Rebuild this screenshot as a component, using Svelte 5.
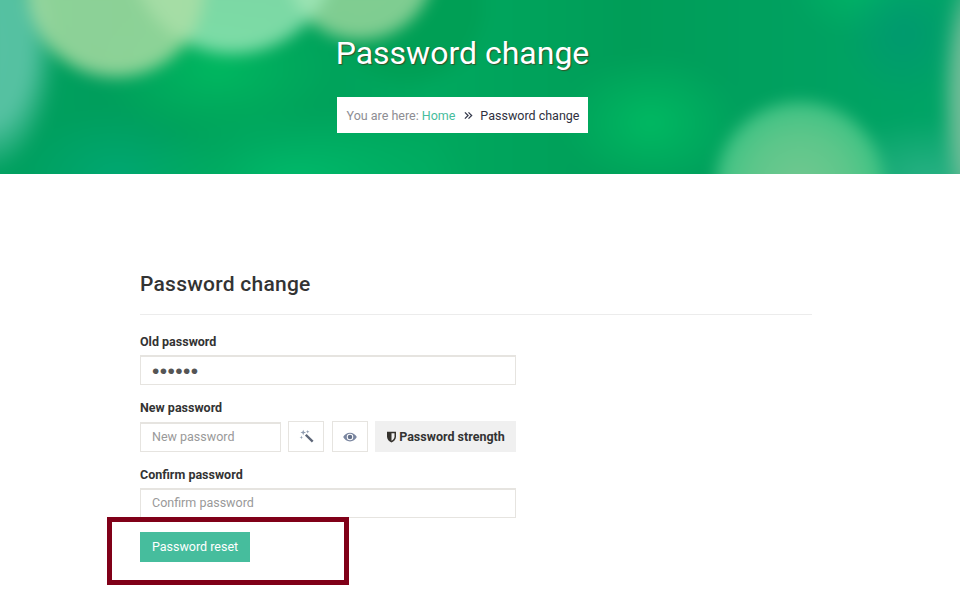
<script lang="ts">
	let oldPassword = $state('123456');
</script>

<header class="hero">
	<h1>Password change</h1>
	<div class="crumbs">
		<span class="here">You are here:</span>
		<a href="#home">Home</a>
		<svg class="chev" viewBox="0 0 10 10" width="9" height="9">
			<path d="M1 1.500 4.500 5 1 8.500M5 1.500 8.500 5 5 8.500" fill="none" stroke="#33384a" stroke-width="1.4" />
		</svg>
		<span class="current">Password change</span>
	</div>
</header>

<main class="content">
	<h2>Password change</h2>
	<form class="form" onsubmit={(e) => e.preventDefault()}>
		<label for="old">Old password</label>
		<input id="old" class="field dots" type="password" bind:value={oldPassword} />

		<label for="new" class="next">New password</label>
		<div class="row">
			<input id="new" class="field grow" type="password" placeholder="New password" />
			<button type="button" class="icon-btn" aria-label="Generate">
				<svg viewBox="0 0 16 16" width="15" height="15">
					<path d="M6.300 7 8.100 5.200 15.500 12.600 13.700 14.400Z" fill="#5d6678" />
					<path d="M4.500.8 5.300 3 7.500 3.700 5.300 4.500 4.500 6.700 3.700 4.500 1.500 3.700 3.700 3ZM9.300 1 9.800 2.400 11.200 2.900 9.800 3.400 9.300 4.800 8.800 3.400 7.400 2.900 8.800 2.400ZM2.500 7 3 8.400 4.400 8.900 3 9.400 2.500 10.800 2 9.400 .6 8.900 2 8.400Z" fill="#8f9cb0" />
				</svg>
			</button>
			<button type="button" class="icon-btn eye" aria-label="Show password">
				<svg viewBox="0 0 16 11" width="14" height="10">
					<path fill-rule="evenodd" d="M8 .5C4.600.5 1.800 2.500.2 5.500 1.800 8.500 4.600 10.500 8 10.500s6.200-2 7.800-5C14.200 2.500 11.400.5 8 .5Zm0 1.300a3.700 3.700 0 1 1 0 7.400 3.700 3.700 0 0 1 0-7.400Z" fill="#7a86a0" />
					<circle cx="8" cy="5.500" r="2.600" fill="#66728c" />
				</svg>
			</button>
			<div class="strength">
				<svg viewBox="0 0 10 12" width="11" height="12">
					<path d="M.5.800h9v4.700c0 3-2 5-4.500 6C2.500 10.500.5 8.500.5 5.500Z" fill="#35322e" />
					<path d="M5 2.300h3v3.200c0 2-1.300 3.300-3 4.200Z" fill="#f0f0f0" />
				</svg>
				<span>Password strength</span>
			</div>
		</div>

		<label for="confirm" class="next">Confirm password</label>
		<input id="confirm" class="field" type="password" placeholder="Confirm password" />

		<button type="submit" class="submit">Password reset</button>
	</form>
</main>

<div class="highlight"></div>

<style>
	:global(body) {
		background: #fff;
		font-family: Roboto, "Liberation Sans", sans-serif;
		color: #333;
		overflow: hidden;
	}
	.hero {
		position: relative;
		overflow: hidden;
		height: 174px;
		box-sizing: border-box;
		padding: 33px 35px 0 0;
		display: flex;
		flex-direction: column;
		align-items: center;
		background: #00a55c;
	}
	/* blurred bokeh backdrop, coordinates are offset by the 20px bleed */
	.hero::before {
		content: '';
		position: absolute;
		inset: -20px;
		filter: blur(8px);
		background:
			radial-gradient(circle 85px at 820px 206px, #72c890 0, #5cc68a 60%, #3ec283 98%, rgba(62, 194, 131, 0) 100%),
			radial-gradient(circle 90px at 136px 8px, rgba(175, 222, 165, 0.8) 0 97%, rgba(175, 222, 165, 0) 100%),
			radial-gradient(circle 105px at 253px -30px, rgba(165, 235, 190, 0.75) 0 97%, rgba(165, 235, 190, 0) 100%),
			radial-gradient(circle 75px at 380px -14px, rgba(170, 220, 165, 0.75) 0 97%, rgba(170, 220, 165, 0) 100%),
			radial-gradient(circle 82px at 428px 26px, #009f55 0 85%, rgba(0, 159, 85, 0) 100%),
			radial-gradient(ellipse 32px 140px at 993px 118px, rgba(120, 190, 155, 0.95) 0 55%, rgba(120, 190, 155, 0) 100%),
			radial-gradient(ellipse 110px 60px at 948px 198px, rgba(45, 178, 135, 0.9) 0, rgba(45, 178, 135, 0) 100%),
			radial-gradient(ellipse 70px 125px at 8px 68px, rgba(90, 195, 165, 0.95) 0 60%, rgba(90, 195, 165, 0) 100%),
			radial-gradient(ellipse 170px 70px at 318px 198px, #00b96a 0, rgba(0, 185, 106, 0) 100%),
			radial-gradient(ellipse 90px 70px at 670px 143px, #00b962 0, rgba(0, 185, 98, 0) 100%),
			radial-gradient(ellipse 60px 70px at 923px 53px, #00996f 0, rgba(0, 153, 111, 0) 100%),
			radial-gradient(ellipse 100px 70px at 138px 198px, #00a872 0, rgba(0, 168, 114, 0) 100%),
			radial-gradient(ellipse 80px 50px at 888px 8px, #00b566 0, rgba(0, 181, 102, 0) 100%),
			radial-gradient(ellipse 120px 80px at 238px 88px, #00b860 0, rgba(0, 184, 96, 0) 100%),
			linear-gradient(90deg, #00a060, #009c58 25%, #00a85e 45%, #009d58 65%, #00a568);
	}
	h1,
	.crumbs {
		position: relative;
	}
	h1 {
		margin: 0;
		font-size: 32px;
		font-weight: 400;
		line-height: 40px;
		color: #fff;
		text-shadow: 1px 1px 1px rgba(70, 50, 20, 0.7);
	}
	.crumbs {
		margin-top: 24px;
		height: 36px;
		padding: 0 9px 0 10px;
		display: flex;
		align-items: center;
		background: #fff;
		font-size: 12.5px;
		white-space: nowrap;
	}
	.here {
		color: #8d8d93;
		margin-right: 3px;
	}
	.crumbs a {
		color: #46bd9d;
		text-decoration: none;
	}
	.chev {
		margin: 0 7px 0 9px;
	}
	.current {
		color: #2f3140;
	}
	.content {
		width: 672px;
		margin-left: 140px;
		padding-top: 97px;
	}
	h2 {
		margin: 0;
		padding-bottom: 17px;
		border-bottom: 1px solid #ececec;
		font-size: 21px;
		font-weight: 500;
		line-height: 26px;
		letter-spacing: 0.25px;
		color: #333;
	}
	.form {
		width: 376px;
		padding-top: 20px;
		display: flex;
		flex-direction: column;
	}
	label {
		font-size: 12.5px;
		font-weight: 700;
		line-height: 14px;
		margin-bottom: 6px;
		color: #333;
	}
	label.next {
		margin-top: 16px;
	}
	.field {
		box-sizing: border-box;
		height: 30px;
		width: 100%;
		padding: 0 11px 2px;
		border: 1px solid #e6e4e0;
		border-top-width: 2px;
		background: #fff;
		font-family: inherit;
		font-size: 12.5px;
		color: #555;
		outline: none;
		border-radius: 0;
	}
	.field::placeholder {
		color: #999;
		opacity: 1;
	}
	.dots {
		font-family: "Liberation Sans", sans-serif;
		font-size: 21px;
		letter-spacing: 0.4px;
		padding: 0 11px;
	}
	.row {
		display: flex;
		gap: 7px;
		height: 31px;
	}
	.row .field {
		height: 30px;
		margin-top: 1px;
	}
	.grow {
		flex: none;
		width: 141px;
	}
	.icon-btn {
		width: 36px;
		height: 31px;
		padding: 0;
		display: flex;
		align-items: center;
		justify-content: center;
		background: #fff;
		border: 1px solid #e6e4e0;
	}
	.eye {
		margin-left: 1px;
	}
	.strength {
		flex: 1;
		display: flex;
		align-items: center;
		justify-content: center;
		gap: 2px;
		background: #f0f0f0;
		font-size: 12.5px;
		font-weight: 700;
		color: #333;
	}
	.submit {
		align-self: flex-start;
		margin-top: 14px;
		width: 110px;
		height: 30px;
		padding: 0 0 2px;
		border: 0;
		background: #46bd9d;
		color: #fff;
		font-family: inherit;
		font-size: 12.5px;
	}
	.highlight {
		position: absolute;
		left: 107px;
		top: 517px;
		width: 232px;
		height: 58px;
		border: 5px solid #800018;
	}
</style>
